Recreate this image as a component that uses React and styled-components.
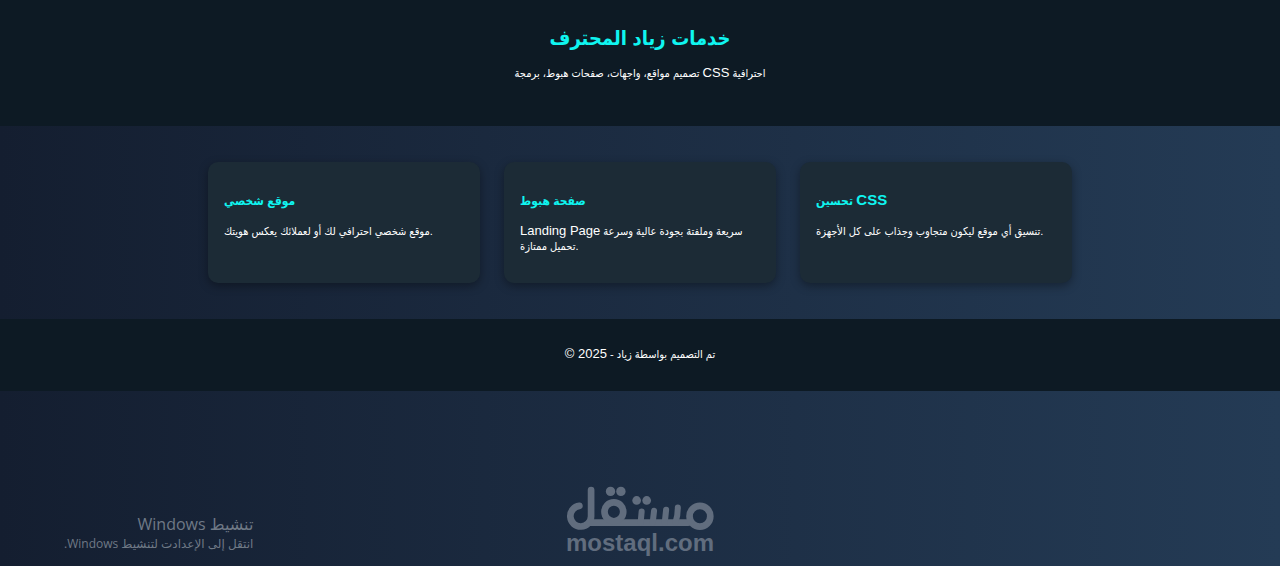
import React from 'react'
import styled, { createGlobalStyle } from 'styled-components'

const services = [
    {
        title: 'موقع شخصي',
        text: 'موقع شخصي احترافي لك أو لعملائك يعكس هويتك.'
    },
    {
        title: 'صفحة هبوط',
        text: 'Landing Page سريعة وملفتة بجودة عالية وسرعة تحميل ممتازة.'
    },
    {
        title: 'تحسين CSS',
        text: 'تنسيق أي موقع ليكون متجاوب وجذاب على كل الأجهزة.'
    }
]

// latin words and numbers are set larger than the arabic around them
const Mixed = ({ text }) => (
    text.split(/(© \d+|[A-Za-z]+(?: [A-Za-z]+)*)/).map((part, i) => (
        i % 2 ? <Latin key={i}>{part}</Latin> : part
    ))
)

const MostaqlLogo = () => (
    <Logo viewBox='47 34 442 134' aria-label='مستقل' role='img'>
        <g fill='none' stroke='currentColor' strokeWidth='20' strokeLinecap='round' strokeLinejoin='round'>
            <path d='M87 93 A31 31 0 1 0 122 124 V46' />
            <path d='M118 143 H412' />
            <circle cx='190' cy='111' r='28' />
            <circle cx='447' cy='124' r='31' />
        </g>
        <g fill='none' stroke='currentColor' strokeWidth='18' strokeLinecap='round'>
            <path d='M273 110 L270 143' />
            <path d='M310 108 L306 143' />
            <path d='M346 105 L342 143' />
            <path d='M381 98 Q381 124 374 143' />
        </g>
        <g fill='currentColor'>
            <circle cx='180' cy='50' r='14' />
            <circle cx='211' cy='50' r='14' />
            <circle cx='258' cy='77' r='13' />
            <circle cx='288' cy='77' r='13' />
        </g>
    </Logo>
)

const App = () => {
    return (
        <Page>
            <GlobalStyle />

            <Header>
                <h1>خدمات زياد المحترف</h1>
                <p><Mixed text='تصميم مواقع، واجهات، صفحات هبوط، برمجة CSS احترافية' /></p>
            </Header>

            <Services>
                {services.map((service, i) => (
                    <Card key={i}>
                        <h3><Mixed text={service.title} /></h3>
                        <p><Mixed text={service.text} /></p>
                    </Card>
                ))}
            </Services>

            <Footer>
                <p><Mixed text='© 2025 - تم التصميم بواسطة زياد' /></p>
            </Footer>

            <Activation dir='rtl'>
                <h4>تنشيط Windows</h4>
                <p>انتقل إلى الإعدادت لتنشيط Windows.</p>
            </Activation>

            <Watermark>
                <MostaqlLogo />
                <span>mostaql.com</span>
            </Watermark>
        </Page>
    )
}

export default App

let cyan = '#0ff5f0'
let dark = '#0d1a24'
let cardDark = '#1c2b36'

const GlobalStyle = createGlobalStyle`
    * {
        box-sizing: border-box;
    }

    body {
        margin: 0;
        background: linear-gradient(to right, #141e30, #243b55);
        color: #fff;
        font-family: 'Liberation Sans', 'DejaVu Sans Condensed', 'DejaVu Sans', sans-serif;
        font-size: 11px;
        line-height: 15px;
    }

    h1, h3, h4, p {
        margin: 0;
    }
`

const Latin = styled.span`
    font-size: 13px;
    line-height: 1;

    h3 > & {
        font-size: 15px;
    }
`

const Page = styled.div`
    position: relative;
    min-height: 100vh;
`

const Header = styled.header`
    display: flex;
    flex-direction: column;
    align-items: center;
    gap: 14px;
    padding: 24px 24px 45px;
    background: ${dark};
    text-align: center;

    > h1 {
        color: ${cyan};
        font-size: 20px;
        line-height: 28px;
    }
`

const Services = styled.main`
    display: grid;
    grid-template-columns: repeat(3, 1fr);
    gap: 24px;
    max-width: 864px;
    margin: 0 auto;
    padding: 36px 0;
`

const Card = styled.section`
    display: flex;
    flex-direction: column;
    gap: 14px;
    min-height: 121px;
    padding: 30px 16px 28px;
    background: ${cardDark};
    border-radius: 10px;
    box-shadow: 0 3px 10px rgba(0, 0, 0, 0.35);

    > h3 {
        color: ${cyan};
        font-size: 12px;
        line-height: 18px;
    }
`

const Footer = styled.footer`
    padding: 28px 16px 29px;
    background: ${dark};
    text-align: center;
`

const Activation = styled.aside`
    position: absolute;
    left: 64px;
    bottom: 14px;
    color: #6f7986;
    font-family: 'Open Sans', 'DejaVu Sans', sans-serif;
    font-size: 12px;
    line-height: 17px;

    > h4 {
        font-size: 16px;
        font-weight: normal;
        line-height: 22px;
    }
`

const Watermark = styled.div`
    position: absolute;
    left: 50%;
    bottom: 12px;
    transform: translateX(-50%);
    display: flex;
    flex-direction: column;
    align-items: center;
    color: #616d7e;
    font-size: 24px;
    font-weight: bold;
    line-height: 23px;
`

const Logo = styled.svg`
    width: 148px;
    height: 45px;
`
